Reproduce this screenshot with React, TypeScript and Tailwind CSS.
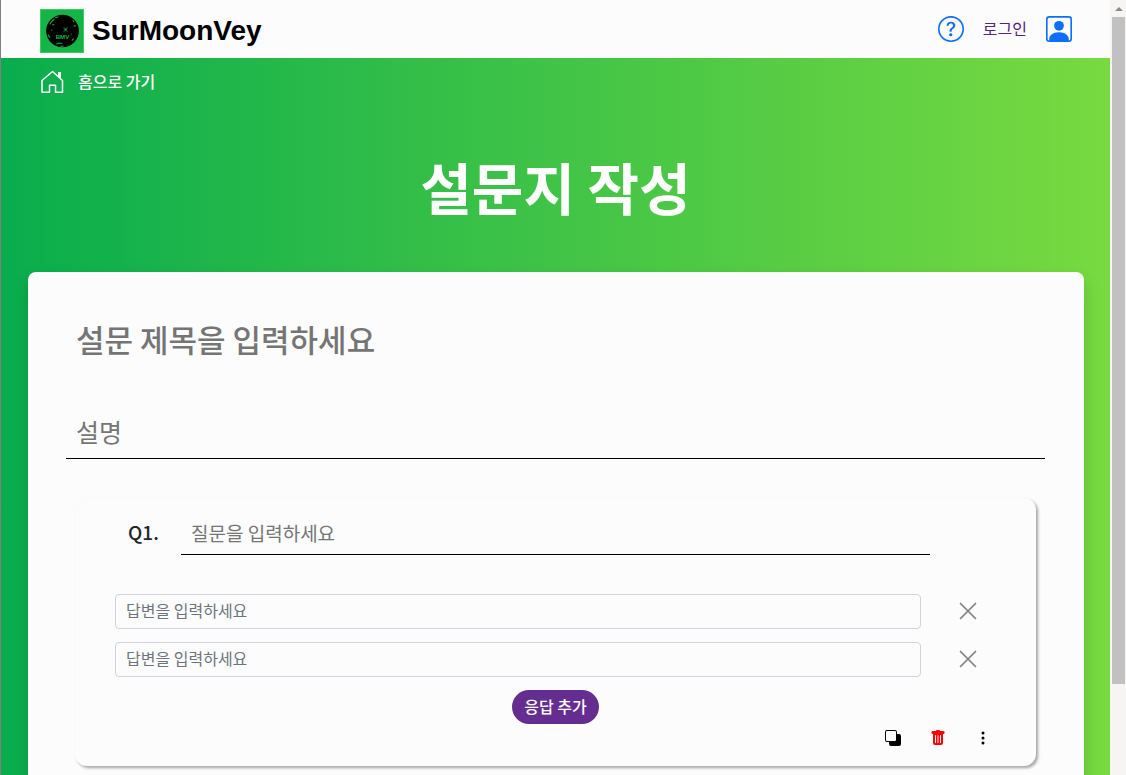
import { useState } from 'react';
import { BsBack, BsPersonSquare, BsQuestionCircle, BsThreeDotsVertical, BsTrashFill } from 'react-icons/bs';

function MoonLogo() {
  return (
    <svg viewBox="0 0 43 43" className="size-11" aria-hidden="true">
      <rect width="43" height="43" fill="#3fcb63" />
      <rect x="1" y="1" width="41" height="41" fill="#14b446" />
      <circle cx="22" cy="21.5" r="16" fill="#000" />
      <g fill="none" stroke="#14b446" strokeWidth="1">
        <path d="M9.500 15l2-3 2.500-2M12 15.500h2M15 8.500l3-1M32 11l1.500 2M33 16.500h2M8 25l1.500 3M16 34.500l2-1h4M20 36.500h3M31 31l2-2" />
      </g>
      <g fill="#14b446">
        <path d="M23 18h1v1h2v-1h1v1h-1v2h1v1h-1v-1h-2v1h-1v-1h1v-2h-1z" />
        <rect x="11" y="20" width="1" height="1" />
        <rect x="30" y="24" width="1" height="1" />
      </g>
      <text x="22" y="29.5" textAnchor="middle" fontSize="6" fontWeight="700" fontFamily="Liberation Sans, sans-serif" fill="#14b446">
        BMV
      </text>
    </svg>
  );
}

function HouseIcon() {
  return (
    <svg viewBox="0 0 24 24" className="size-6" fill="none" stroke="currentColor" strokeWidth="1.5" strokeLinejoin="round" aria-hidden="true">
      <path d="M2 10.500L12.500 1.500L22.500 10.500V22.250H15.500V15.250H9.500V22.250H2Z" />
      <path d="M18 2H21V8.500L18 6Z" fill="currentColor" stroke="none" />
    </svg>
  );
}

function CrossIcon() {
  return (
    <svg viewBox="0 0 18 18" className="size-[18px]" fill="none" stroke="currentColor" strokeWidth="1.7" strokeLinecap="round" aria-hidden="true">
      <path d="M1.500 1.500L16.500 16.500M16.500 1.500L1.500 16.500" />
    </svg>
  );
}

function Header() {
  return (
    <header className="flex h-[58px] shrink-0 items-center justify-between bg-[#fcfcfc] pl-[39px] pr-[38px]">
      <a href="#" className="flex items-center gap-2 pt-1">
        <MoonLogo />
        <span className="font-['Liberation_Sans',Arial,sans-serif] text-[28px] leading-8 font-bold text-black">
          SurMoonVey
        </span>
      </a>
      <div className="flex items-center gap-[19px]">
        <button type="button" aria-label="도움말" className="text-[#0d6efd]">
          <BsQuestionCircle size={26} />
        </button>
        <a href="#" className="pb-0.5 text-[16px] leading-6 text-[#55247f]">로그인</a>
        <button type="button" aria-label="내 계정" className="text-[#0d6efd]">
          <BsPersonSquare size={26} />
        </button>
      </div>
    </header>
  );
}

function AnswerRow({ index, onRemove }: { index: number; onRemove: () => void }) {
  return (
    <div className="flex items-center">
      <input
        type="text"
        aria-label={`답변 ${index}`}
        placeholder="답변을 입력하세요"
        className="h-[35px] min-w-0 flex-1 rounded border border-[#ced4da] bg-transparent px-2.5 pb-1 text-[16px] text-[#212529] placeholder:text-[#6c757d]"
      />
      <button type="button" aria-label="답변 삭제" onClick={onRemove} className="ml-9 p-0.5 pb-1 text-[#808080]">
        <CrossIcon />
      </button>
    </div>
  );
}

function QuestionCard() {
  const [answers, setAnswers] = useState([1, 2]);
  const addAnswer = () => setAnswers((list) => [...list, Math.max(0, ...list) + 1]);

  return (
    <section className="ml-[47px] mr-12 mt-[39px] rounded-xl bg-[#fcfcfc] pt-4 pb-5 shadow-[2px_2px_3px_rgba(0,0,0,0.35)]">
      <div className="flex items-center pl-[53px] pr-[106px]">
        <label htmlFor="question-1" className="w-[53px] pb-1.5 text-[19px] leading-7 font-medium text-[#212529]">
          Q1.
        </label>
        <input
          id="question-1"
          type="text"
          placeholder="질문을 입력하세요"
          className="h-[41px] min-w-0 flex-1 border-b border-black bg-transparent px-2.5 pb-1 text-[19px] text-[#212529] placeholder:text-[#757575]"
        />
      </div>
      <div className="mt-[39px] flex flex-col gap-[13px] pl-10 pr-[57px]">
        {answers.map((id, i) => (
          <AnswerRow
            key={id}
            index={i + 1}
            onRemove={() => setAnswers((list) => list.filter((item) => item !== id))}
          />
        ))}
      </div>
      <div className="mt-[13px] flex justify-center">
        <button
          type="button"
          onClick={addAnswer}
          className="h-[34px] rounded-full bg-[#662d91] px-3 pb-0.5 text-[16px] leading-6 font-medium text-white"
        >
          응답 추가
        </button>
      </div>
      <div className="mt-1.5 flex justify-end gap-[29px] pr-[45px]">
        <button type="button" aria-label="질문 복제" className="text-black">
          <BsBack size={16} />
        </button>
        <button type="button" aria-label="질문 삭제" className="text-[#ff0000]">
          <BsTrashFill size={16} />
        </button>
        <button type="button" aria-label="더보기" className="text-black">
          <BsThreeDotsVertical size={16} />
        </button>
      </div>
    </section>
  );
}

function ScrollTrack() {
  return (
    <div className="flex w-4 shrink-0 flex-col bg-[#f6f5f4] pr-px pl-0.5" aria-hidden="true">
      <div className="flex h-[17px] items-center justify-center">
        <svg viewBox="0 0 8 4" className="h-1 w-2">
          <path d="M0 4L4 0L8 4Z" fill="#8a8a8a" />
        </svg>
      </div>
      <div className="h-[86%] bg-[#c1c1c1]" />
    </div>
  );
}

export default function App() {
  return (
    <div className="flex h-screen overflow-hidden border-l border-[#808080] font-['Noto_Sans_CJK_KR',sans-serif]">
      <div className="flex min-w-0 flex-1 flex-col">
        <Header />
        <div className="min-h-0 flex-1 overflow-hidden bg-linear-[90deg] from-[#09ad4d] to-[#78da40]">
          <nav className="flex h-12 items-center pl-[39px]">
            <a href="#" className="flex items-center gap-3.5 text-[16px] leading-6 font-medium text-white">
              <HouseIcon />
              <span className="pb-0.5">홈으로 가기</span>
            </a>
          </nav>
          <h1 className="pt-10 text-center text-[56px] leading-[80px] font-bold text-white">설문지 작성</h1>
          <main className="mx-[27px] mr-[26px] mt-[46px] rounded-lg bg-[#fcfcfc] pt-9 pb-12 shadow-[0_8px_16px_rgba(0,0,0,0.15)]">
            <div className="pl-[38px] pr-[39px]">
              <input
                type="text"
                aria-label="설문 제목"
                placeholder="설문 제목을 입력하세요"
                className="block h-16 w-full bg-transparent px-2.5 pb-1 text-[31px] font-medium text-[#212529] placeholder:text-[#757575]"
              />
              <input
                type="text"
                aria-label="설명"
                placeholder="설명"
                className="mt-[35px] block h-[52px] w-full border-b border-black bg-transparent px-2.5 pb-1 text-[25px] text-[#212529] placeholder:text-[#757575]"
              />
            </div>
            <QuestionCard />
          </main>
        </div>
      </div>
      <ScrollTrack />
    </div>
  );
}
